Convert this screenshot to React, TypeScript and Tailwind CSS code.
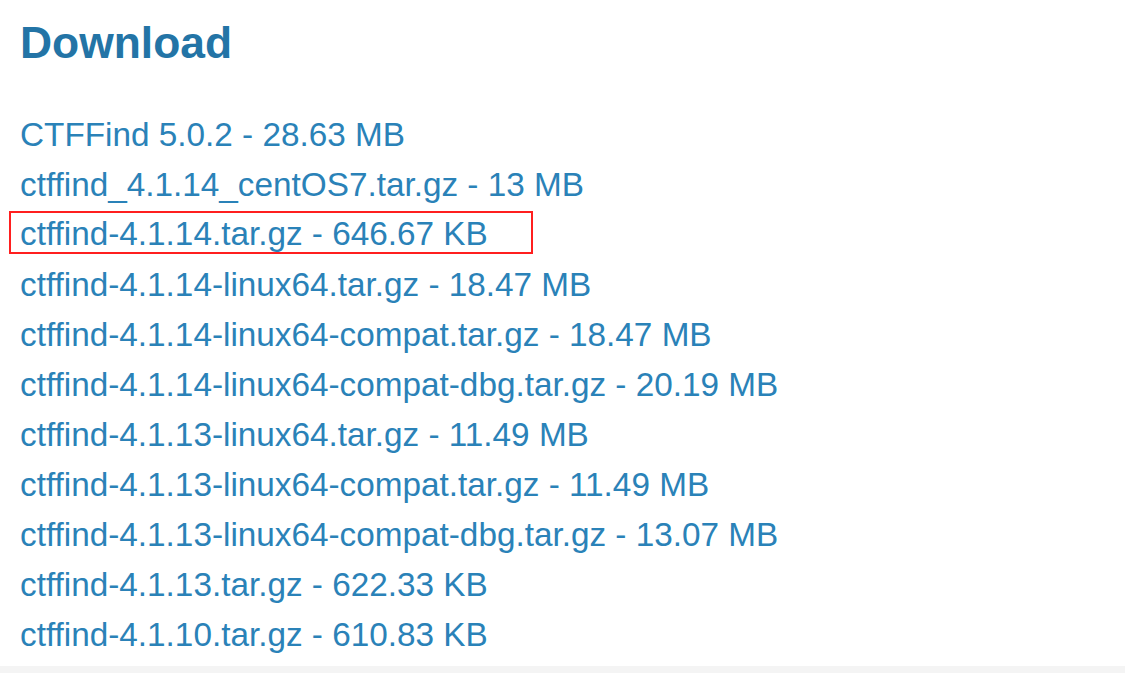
const FILES = [
  "CTFFind 5.0.2 - 28.63 MB",
  "ctffind_4.1.14_centOS7.tar.gz - 13 MB",
  "ctffind-4.1.14.tar.gz - 646.67 KB",
  "ctffind-4.1.14-linux64.tar.gz - 18.47 MB",
  "ctffind-4.1.14-linux64-compat.tar.gz - 18.47 MB",
  "ctffind-4.1.14-linux64-compat-dbg.tar.gz - 20.19 MB",
  "ctffind-4.1.13-linux64.tar.gz - 11.49 MB",
  "ctffind-4.1.13-linux64-compat.tar.gz - 11.49 MB",
  "ctffind-4.1.13-linux64-compat-dbg.tar.gz - 13.07 MB",
  "ctffind-4.1.13.tar.gz - 622.33 KB",
  "ctffind-4.1.10.tar.gz - 610.83 KB",
];

export default function App() {
  return (
    <div className="w-[1125px] h-[673px] bg-white flex flex-col overflow-hidden font-['Liberation_Sans',Arial,sans-serif]">
      <div className="flex-1 pl-[20px] pt-[18px]">
        <h2 className="text-[44.4px] leading-[50px] font-bold text-[#2374a6]">
          Download
        </h2>

        {/* file list */}
        <ul className="mt-[40px] flex flex-col">
          {FILES.map((f, i) => (
            <li key={f} className="h-[50px] flex items-center">
              {i === 2 ? (
                <span className="-ml-[11px] -mt-[2px] h-[43px] w-[524px] border-2 border-[#ff1f1f] flex items-center pl-[9px]">
                  <a className="pt-[4px] text-[33.3px] leading-none text-[#2a82b8]">{f}</a>
                </span>
              ) : (
                <a className="pt-[4px] text-[33.3px] leading-none text-[#2a82b8]">{f}</a>
              )}
            </li>
          ))}
        </ul>
      </div>
      <div className="h-[7px] bg-[#f4f4f4]" />
    </div>
  );
}
